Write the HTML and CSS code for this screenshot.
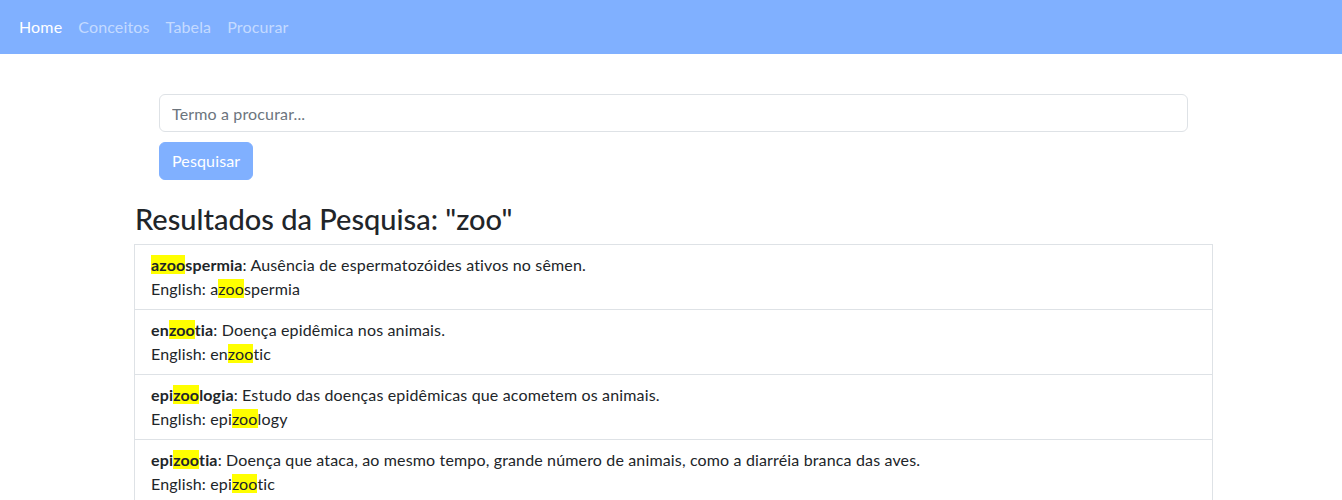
FILE: index.html
```html
<!DOCTYPE html>
<html lang="pt">
<head>
<meta charset="utf-8">
<title>Procurar</title>
<link rel="stylesheet" href="styles.css">
</head>
<body>
<nav class="navbar">
  <a class="nav-link active" href="#">Home</a>
  <a class="nav-link" href="#">Conceitos</a>
  <a class="nav-link" href="#">Tabela</a>
  <a class="nav-link" href="#">Procurar</a>
</nav>
<main class="container">
  <form class="search">
    <input class="search-input" type="text" placeholder="Termo a procurar...">
    <button class="search-btn" type="button">Pesquisar</button>
  </form>
  <h3 class="results-title">Resultados da Pesquisa: "zoo"</h3>
  <ul class="list">
    <li class="item">
      <div><b><span class="hl">azoo</span>spermia</b>: Ausência de espermatozóides ativos no sêmen.</div>
      <div>English: a<span class="hl">zoo</span>spermia</div>
    </li>
    <li class="item">
      <div><b>en<span class="hl">zoo</span>tia</b>: Doença epidêmica nos animais.</div>
      <div>English: en<span class="hl">zoo</span>tic</div>
    </li>
    <li class="item">
      <div><b>epi<span class="hl">zoo</span>logia</b>: Estudo das doenças epidêmicas que acometem os animais.</div>
      <div>English: epi<span class="hl">zoo</span>logy</div>
    </li>
    <li class="item">
      <div><b>epi<span class="hl">zoo</span>tia</b>: Doença que ataca, ao mesmo tempo, grande número de animais, como a diarréia branca das aves.</div>
      <div>English: epi<span class="hl">zoo</span>tic</div>
    </li>
  </ul>
</main>
</body>
</html>
```
FILE: styles.css
```css
* { box-sizing: border-box; }
body {
  margin: 0;
  font-family: "Segoe UI", Lato, "Noto Sans", sans-serif;
  font-size: 16px;
  line-height: 24px;
  letter-spacing: 0.15px;
  color: #212529;
  background: #fff;
}
.navbar {
  height: 54px;
  background: #80b0ff;
  display: flex;
  align-items: center;
  padding: 0 11px;
}
.nav-link {
  padding: 0 8px;
  color: rgba(255,255,255,0.55);
  text-decoration: none;
}
.nav-link.active { color: #fff; }
.container {
  width: 1079px;
  margin: 0 0 0 calc(50% - 537px);
}
.search {
  padding: 40px 25px 0;
  display: flex;
  flex-direction: column;
  align-items: flex-start;
  gap: 10px;
}
.search-input {
  width: 100%;
  height: 38px;
  border: 1px solid #dee2e6;
  border-radius: 6px;
  padding: 6px 12px;
  font: inherit;
  letter-spacing: inherit;
  color: #212529;
}
.search-input::placeholder { color: #6c757d; }
.search-btn {
  height: 38px;
  padding: 6px 12px;
  border: 1px solid #80b0ff;
  background: #80b0ff;
  color: #fff;
  border-radius: 6px;
  font: inherit;
  letter-spacing: inherit;
}
.results-title {
  margin: 22px 0 8px 1px;
  font-size: 29px;
  font-weight: 500;
  line-height: 34px;
  letter-spacing: 0;
}
.list {
  list-style: none;
  margin: 0;
  padding: 0;
  border: 1px solid #dee2e6;
}
.item {
  padding: 8px 16px;
  border-top: 1px solid #dee2e6;
}
.item:first-child { border-top: 0; }
.hl { background: #ffff00; }
b { font-weight: 700; }
```
